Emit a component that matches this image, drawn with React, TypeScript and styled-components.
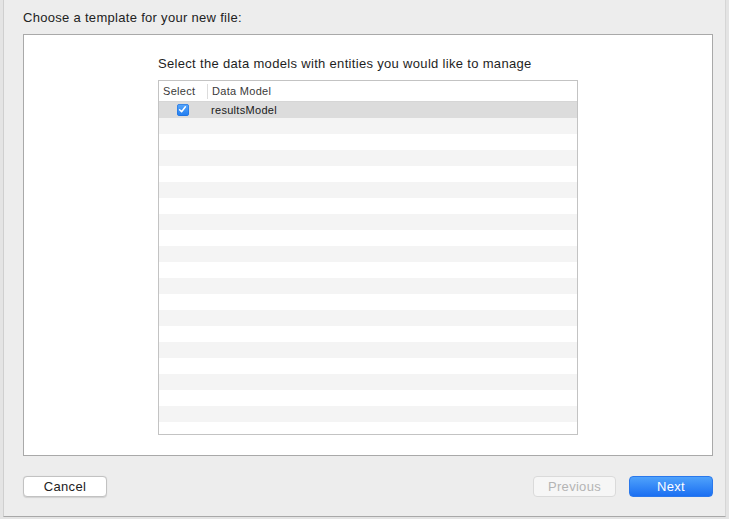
import React from "react";
import styled, { createGlobalStyle } from "styled-components";

const Global = createGlobalStyle`
  html, body { margin: 0; padding: 0; }
  body {
    background: #e2e2e2;
    font-family: "Helvetica Neue", "Liberation Sans", Arial, sans-serif;
    -webkit-font-smoothing: antialiased;
  }
`;

const Screen = styled.div`
  width: 729px;
  height: 519px;
  overflow: hidden;
  background: #e4e4e4;
  display: flex;
  align-items: flex-start;
`;

const Sheet = styled.div`
  margin-left: 3px;
  width: 723px;
  height: 517px;
  box-sizing: border-box;
  background: #ededed;
  border-left: 1px solid #cfcfcf;
  border-right: 1px solid #d6d6d6;
  border-bottom: 1px solid #a8a8a8;
  display: flex;
  flex-direction: column;
  padding-left: 19px;
`;

const Title = styled.div`
  height: 34px;
  box-sizing: border-box;
  padding-top: 10px;
  font-size: 13px;
  color: #222;
  letter-spacing: 0.3px;
`;

const Panel = styled.div`
  width: 690px;
  height: 423px;
  box-sizing: border-box;
  background: #fff;
  border: 1px solid #a9a9a9;
  display: flex;
  flex-direction: column;
  padding: 21px 0 0 134px;
`;

const Prompt = styled.div`
  font-size: 13px;
  color: #1e1e1e;
  height: 24px;
  letter-spacing: 0.32px;
`;

const Table = styled.div`
  width: 420px;
  height: 355px;
  box-sizing: border-box;
  border: 1px solid #c3c3c3;
  overflow: hidden;
  display: flex;
  flex-direction: column;
`;

const HeaderRow = styled.div`
  height: 21px;
  flex: 0 0 21px;
  box-sizing: border-box;
  border-bottom: 1px solid #d6d6d6;
  display: flex;
  align-items: center;
  padding-top: 1px;
  font-size: 11px;
  color: #3a3a3a;
  letter-spacing: 0.3px;
`;

const HeaderCell = styled.div<{ $w?: number; $sep?: boolean }>`
  ${(p) => (p.$w ? `width: ${p.$w}px; flex: 0 0 ${p.$w}px;` : "flex: 1;")}
  box-sizing: border-box;
  padding-left: 4px;
  height: 15px;
  line-height: 15px;
  ${(p) => (p.$sep ? "border-right: 1px solid #dcdcdc;" : "")}
`;

const Row = styled.div<{ $tone: "sel" | "odd" | "even" }>`
  height: 16px;
  flex: 0 0 16px;
  display: flex;
  align-items: center;
  font-size: 11px;
  color: #1a1a1a;
  letter-spacing: 0.3px;
  background: ${(p) =>
    p.$tone === "sel" ? "#dcdcdc" : p.$tone === "odd" ? "#f4f4f4" : "#ffffff"};
`;

const CheckCell = styled.div`
  width: 48px;
  flex: 0 0 48px;
  display: flex;
  justify-content: center;
  padding-right: 1px;
  box-sizing: border-box;
`;

const Check = styled.div`
  width: 12px;
  height: 12px;
  border-radius: 3px;
  background: linear-gradient(#5aa8fb, #1f7cf0);
  box-shadow: inset 0 0 0 0.5px #1a6ad8;
  display: flex;
  align-items: center;
  justify-content: center;
`;

const NameCell = styled.div`
  padding-left: 4px;
`;

const Footer = styled.div`
  height: 60px;
  display: flex;
  align-items: center;
  width: 690px;
  box-sizing: border-box;
`;

const Button = styled.button<{ $kind?: "default" | "disabled" | "primary"; $w: number }>`
  width: ${(p) => p.$w}px;
  height: 21px;
  box-sizing: border-box;
  border-radius: 4px;
  font-family: inherit;
  font-size: 13px;
  letter-spacing: 0.3px;
  padding: 0;
  cursor: default;
  ${(p) =>
    p.$kind === "primary"
      ? `background: linear-gradient(#4fa2fb, #1b6ff2); color: #fff; border: 1px solid #2a78ec;`
      : p.$kind === "disabled"
      ? `background: #f6f6f6; color: #b4b4b4; border: 1px solid #dadada;`
      : `background: #fff; color: #222; border: 1px solid #c2c2c2; box-shadow: 0 0.5px 1px rgba(0,0,0,0.12);`}
`;

const Spacer = styled.div`
  flex: 1;
`;

const Gap = styled.div`
  width: 13px;
`;

export default function App() {
  const rows = Array.from({ length: 22 }, (_, i) => i);
  return (
    <>
      <Global />
      <Screen>
        <Sheet>
          <Title>Choose a template for your new file:</Title>
          <Panel>
            <Prompt>Select the data models with entities you would like to manage</Prompt>
            <Table>
              <HeaderRow>
                <HeaderCell $w={49} $sep>Select</HeaderCell>
                <HeaderCell>Data Model</HeaderCell>
              </HeaderRow>
              {rows.map((i) => (
                <Row key={i} $tone={i === 0 ? "sel" : i % 2 === 1 ? "odd" : "even"}>
                  {i === 0 && (
                    <>
                      <CheckCell>
                        <Check>
                          <svg width="9" height="9" viewBox="0 0 9 9">
                            <path d="M1.6 4.8 L3.6 6.8 L7.4 1.8" fill="none" stroke="#fff" strokeWidth="1.5" strokeLinecap="round" strokeLinejoin="round" />
                          </svg>
                        </Check>
                      </CheckCell>
                      <NameCell>resultsModel</NameCell>
                    </>
                  )}
                </Row>
              ))}
            </Table>
          </Panel>
          <Footer>
            <Button $w={84}>Cancel</Button>
            <Spacer />
            <Button $w={83} $kind="disabled">Previous</Button>
            <Gap />
            <Button $w={84} $kind="primary">Next</Button>
          </Footer>
        </Sheet>
      </Screen>
    </>
  );
}
